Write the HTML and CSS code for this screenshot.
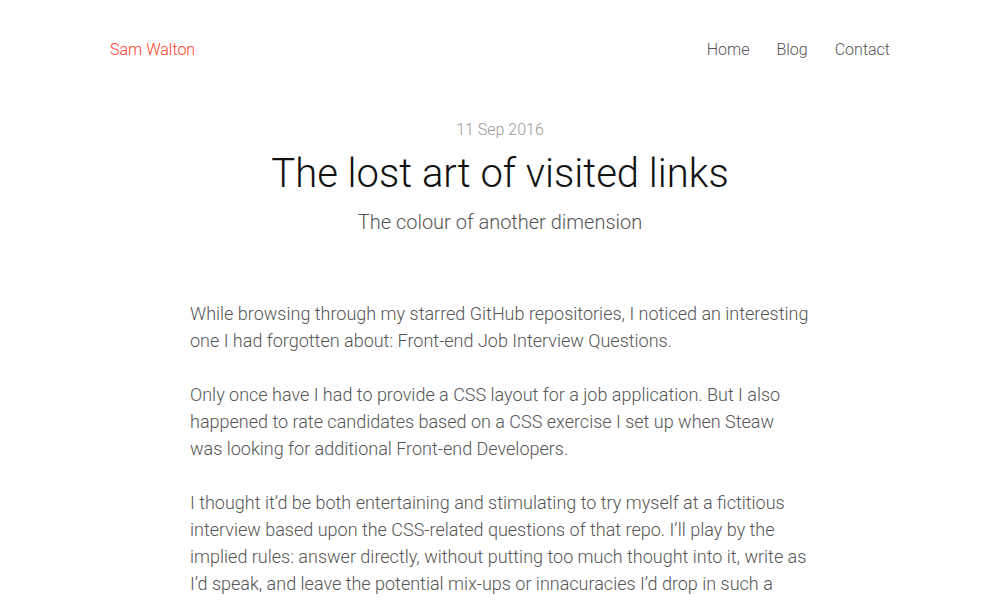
FILE: index.html
```html
<!DOCTYPE html>
<html>
<head>
<meta charset="utf-8">
<link rel="stylesheet" href="styles.css">
</head>
<body>
<header class="site-header">
  <a class="brand" href="#">Sam Walton</a>
  <nav class="nav">
    <a href="#">Home</a>
    <a href="#">Blog</a>
    <a href="#">Contact</a>
  </nav>
</header>
<main class="post">
  <div class="post-head">
    <div class="date">11 Sep 2016</div>
    <h1 class="title">The lost art of visited links</h1>
    <p class="subtitle">The colour of another dimension</p>
  </div>
  <div class="content">
    <p>While browsing through my starred GitHub repositories, I noticed an interesting one I had forgotten about: Front-end Job Interview Questions.</p>
    <p>Only once have I had to provide a CSS layout for a job application. But I also happened to rate candidates based on a CSS exercise I set up when Steaw was looking for additional Front-end Developers.</p>
    <p>I thought it’d be both entertaining and stimulating to try myself at a fictitious interview based upon the CSS-related questions of that repo. I’ll play by the implied rules: answer directly, without putting too much thought into it, write as I’d speak, and leave the potential mix-ups or innacuracies I’d drop in such a situation.</p>
  </div>
</main>
</body>
</html>
```
FILE: styles.css
```css
html, body {
  margin: 0;
  padding: 0;
  background: #fff;
}
body {
  font-family: Roboto, "Liberation Sans", sans-serif;
  font-weight: 300;
  color: #555;
}
a { text-decoration: none; }
.site-header {
  width: 780px;
  margin: 0 auto;
  display: flex;
  justify-content: space-between;
  align-items: center;
  height: 98px;
  font-size: 16px;
}
.brand { color: #ff3b1f; }
.nav { display: flex; gap: 27px; }
.nav a { color: #555; }
.post-head {
  text-align: center;
  padding-top: 21px;
}
.date {
  font-size: 16px;
  color: #999;
  line-height: 22px;
}
.title {
  margin: 9px 0 0;
  font-size: 40px;
  font-weight: 300;
  color: #111;
  line-height: 48px;
}
.subtitle {
  margin: 9px 0 0;
  font-size: 20px;
  color: #555;
  line-height: 30px;
}
.content {
  width: 620px;
  margin: 63px auto 0;
  font-size: 18px;
  line-height: 27px;
}
.content p { margin: 0 0 27px; }
```
